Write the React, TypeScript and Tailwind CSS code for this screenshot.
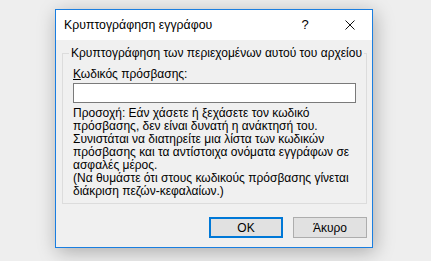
import React from "react";

const warning = [
  "Προσοχή: Εάν χάσετε ή ξεχάσετε τον κωδικό",
  "πρόσβασης, δεν είναι δυνατή η ανάκτησή του.",
  "Συνιστάται να διατηρείτε μια λίστα των κωδικών",
  "πρόσβασης και τα αντίστοιχα ονόματα εγγράφων σε",
  "ασφαλές μέρος.",
  "(Να θυμάστε ότι στους κωδικούς πρόσβασης γίνεται",
  "διάκριση πεζών-κεφαλαίων.)",
];

export default function App() {
  return (
    <div className="w-[431px] h-[261px] bg-[#eeeeee] pt-[9px] pl-[55px] overflow-hidden font-['Liberation_Sans',sans-serif] text-[12px] text-black">
      <div className="w-[318px] h-[239px] border border-[#1a7ee0] bg-[#f0f0f0] shadow-[2px_4px_18px_rgba(0,0,0,0.28)] flex flex-col">
        {/* title bar */}
        <div className="h-[30px] bg-white flex items-center pl-[8px] pr-[17px]">
          <span className="flex-1 leading-[16px] text-[12.3px]">Κρυπτογράφηση εγγράφου</span>
          <span className="w-[12px] text-center mr-[34px] text-[13px] leading-[16px]">?</span>
          <svg width="10" height="10" viewBox="0 0 10 10">
            <path d="M0.5 0.5 L9.5 9.5 M9.5 0.5 L0.5 9.5" stroke="#111" strokeWidth="1" fill="none" />
          </svg>
        </div>

        {/* body */}
        <div className="flex-1 pt-[5px] px-[6px]">
          <fieldset className="min-w-0 border border-[#dcdcdc] w-[305px] px-[6px] pt-[5px] pb-[5px]">
            <legend className="px-[2px] leading-[16px] whitespace-nowrap">
              Κρυπτογράφηση των περιεχομένων αυτού του αρχείου
            </legend>
            <div className="pl-[4px]">
              <div className="leading-[16px]">
                <span className="underline">Κ</span>ωδικός πρόσβασης:
              </div>
              <div className="mt-[1px] h-[20px] w-[283px] bg-white border border-[#7a7a7a]" />
              <div className="mt-[4px] leading-[13px] whitespace-nowrap">
                {warning.map((line, i) => (
                  <div key={i}>{line}</div>
                ))}
              </div>
            </div>
          </fieldset>

          <div className="flex justify-end gap-[10px] mt-[13px] w-[305px]">
            <button className="w-[74px] h-[21px] bg-[#e1e1e1] border-2 border-[#0078d7] leading-[16px]">
              OK
            </button>
            <button className="w-[74px] h-[21px] bg-[#e1e1e1] border border-[#adadad] leading-[16px]">
              Άκυρο
            </button>
          </div>
        </div>
      </div>
    </div>
  );
}
